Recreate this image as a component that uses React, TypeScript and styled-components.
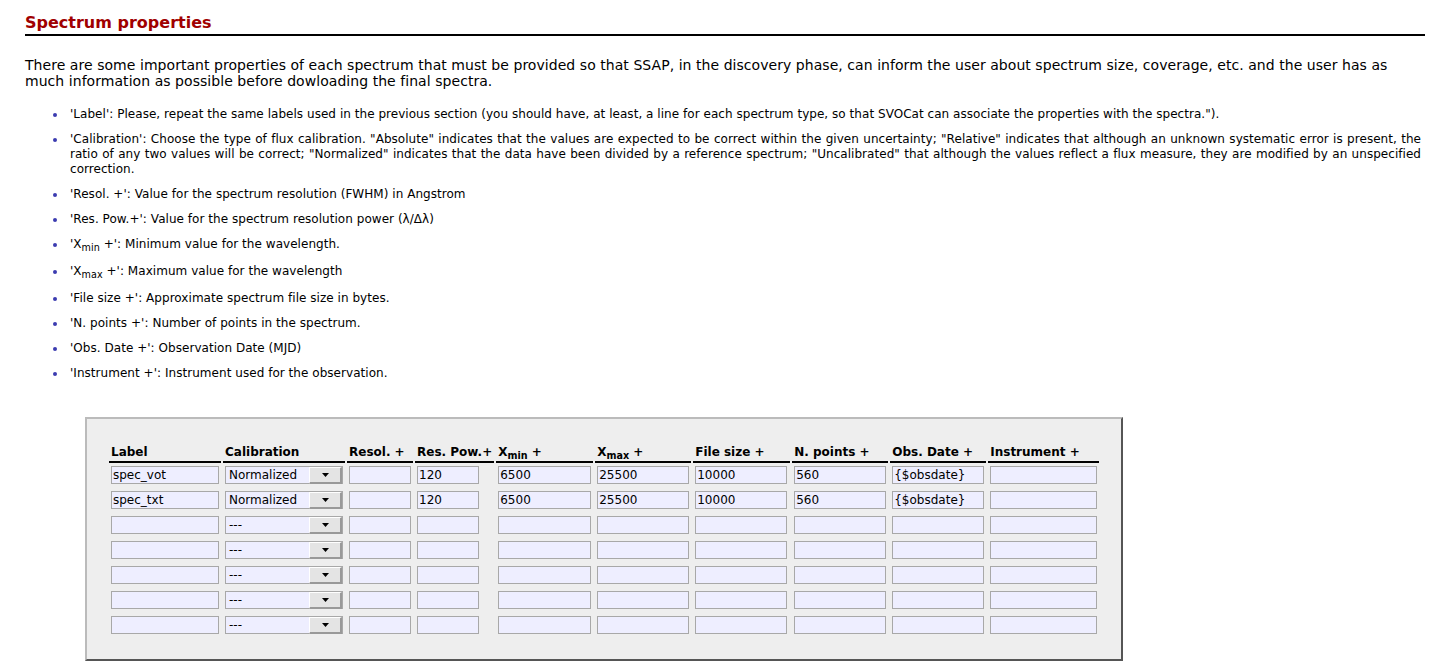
import React from 'react';
import styled, { createGlobalStyle } from 'styled-components';

const GlobalStyle = createGlobalStyle`
  body {
    margin: 0;
    background: #fff;
    color: #000;
    font-family: "DejaVu Sans", Verdana, sans-serif;
  }
`;

const Page = styled.div`
  padding: 13px 30px 0 25px;
`;

const Title = styled.h2`
  margin: 0;
  font-size: 16px;
  line-height: 20px;
  font-weight: bold;
  color: #a00000;
  border-bottom: 2px solid #000;
  padding-bottom: 1px;
`;

const Intro = styled.p`
  margin: 21px 0 18px;
  font-size: 14px;
  line-height: 16px;
  letter-spacing: 0.05px;
`;

const Notes = styled.ul`
  list-style: none;
  margin: 0;
  padding: 0 4px 0 45px;
  font-size: 12px;
  line-height: 15px;
  letter-spacing: 0.04px;
  text-align: justify;
`;

const Note = styled.li<{ $sub?: boolean }>`
  position: relative;
  margin-top: 10px;
  padding-bottom: ${({ $sub }) => ($sub ? '2px' : '0')};

  &::before {
    content: '';
    position: absolute;
    left: -17px;
    top: 6px;
    width: 4px;
    height: 4px;
    border-radius: 50%;
    background: #3b3bb0;
  }
`;

const Box = styled.div`
  box-sizing: border-box;
  margin: 36px 0 0 60px;
  width: 1038px;
  background: #eeeeee;
  border-style: solid;
  border-width: 2px;
  border-color: #bbbbbb #555555 #555555 #bbbbbb;
  padding: 24px 0 21px 20px;
`;

const Grid = styled.table`
  border-collapse: separate;
  border-spacing: 2px 0;
  font-size: 12px;
`;

const Head = styled.th`
  text-align: left;
  font-weight: bold;
  padding: 2px 2px 1px;
  border-bottom: 2px solid #000;
  white-space: nowrap;
  line-height: 15px;
`;

const Cell = styled.td`
  padding: 3px 2px 4px;
  height: 18px;
`;

const Field = styled.input<{ w: number }>`
  box-sizing: border-box;
  display: block;
  width: ${({ w }) => w}px;
  height: 18px;
  margin: 0;
  padding: 0 1px;
  border: 1px solid #a8a8a8;
  background: #eeeeff;
  font-family: "DejaVu Sans", Verdana, sans-serif;
  font-size: 12px;
  color: #000;
  outline: none;
`;

const Select = styled.div`
  box-sizing: border-box;
  display: flex;
  width: 118px;
  height: 18px;
  border: 1px solid #a8a8a8;
  background: #eeeeff;
`;

const SelectText = styled.span`
  flex: 1;
  padding: 0 3px;
  font-size: 12px;
  line-height: 17px;
  white-space: nowrap;
  overflow: hidden;
`;

const SelectButton = styled.span`
  box-sizing: border-box;
  width: 33px;
  height: 17px;
  display: flex;
  align-items: center;
  justify-content: center;
  background: #e4e4e4;
  border-right: 2px solid #999;
  border-bottom: 2px solid #999;
  border-top: 1px solid #fff;
  border-left: 1px solid #fff;
`;

const Sub = styled.sub`
  font-size: 0.8em;
  vertical-align: -3px;
  line-height: 0;
`;

const cols = [
  { key: 'label', head: 'Label', w: 108 },
  { key: 'cal', head: 'Calibration', w: 118 },
  { key: 'resol', head: 'Resol. +', w: 62 },
  { key: 'respow', head: 'Res. Pow.+', w: 62 },
  { key: 'xmin', head: 'min', w: 93 },
  { key: 'xmax', head: 'max', w: 92 },
  { key: 'fsize', head: 'File size +', w: 92 },
  { key: 'npts', head: 'N. points +', w: 92 },
  { key: 'obs', head: 'Obs. Date +', w: 92 },
  { key: 'inst', head: 'Instrument +', w: 107 },
];

const headWidths = [112, 122, 66, 78, 97, 96, 97, 96, 95, 111];

type Row = { label: string; cal: string; resol: string; respow: string; xmin: string; xmax: string; fsize: string; npts: string; obs: string; inst: string };

const filled = (label: string): Row => ({
  label, cal: 'Normalized', resol: '', respow: '120', xmin: '6500', xmax: '25500', fsize: '10000', npts: '560', obs: '{$obsdate}', inst: '',
});
const empty: Row = { label: '', cal: '---', resol: '', respow: '', xmin: '', xmax: '', fsize: '', npts: '', obs: '', inst: '' };

const rows: Row[] = [filled('spec_vot'), filled('spec_txt'), empty, empty, empty, empty, empty];

const Arrow = () => (
  <svg width="7" height="4" viewBox="0 0 7 4">
    <path d="M0 0H7L3.5 4Z" fill="#000" />
  </svg>
);

const headLabel = (c: typeof cols[number]) => {
  if (c.key === 'xmin' || c.key === 'xmax') {
    return <>X<Sub>{c.head}</Sub> +</>;
  }
  return c.head;
};

export default function App() {
  return (
    <>
      <GlobalStyle />
      <Page>
        <Title>Spectrum properties</Title>
        <Intro>
          There are some important properties of each spectrum that must be provided so that SSAP, in the discovery phase, can inform the user about spectrum size, coverage, etc. and the user has as much information as possible before dowloading the final spectra.
        </Intro>
        <Notes>
          <Note>'Label': Please, repeat the same labels used in the previous section (you should have, at least, a line for each spectrum type, so that SVOCat can associate the properties with the spectra.").</Note>
          <Note>'Calibration': Choose the type of flux calibration. "Absolute" indicates that the values are expected to be correct within the given uncertainty; "Relative" indicates that although an unknown systematic error is present, the ratio of any two values will be correct; "Normalized" indicates that the data have been divided by a reference spectrum; "Uncalibrated" that although the values reflect a flux measure, they are modified by an unspecified correction.</Note>
          <Note>'Resol. +': Value for the spectrum resolution (FWHM) in Angstrom</Note>
          <Note>'Res. Pow.+': Value for the spectrum resolution power (λ/Δλ)</Note>
          <Note $sub>'X<Sub>min</Sub> +': Minimum value for the wavelength.</Note>
          <Note $sub>'X<Sub>max</Sub> +': Maximum value for the wavelength</Note>
          <Note>'File size +': Approximate spectrum file size in bytes.</Note>
          <Note>'N. points +': Number of points in the spectrum.</Note>
          <Note>'Obs. Date +': Observation Date (MJD)</Note>
          <Note>'Instrument +': Instrument used for the observation.</Note>
        </Notes>
        <Box>
          <Grid>
            <thead>
              <tr>
                {cols.map((c, i) => (
                  <Head key={c.key} style={{ width: headWidths[i] - 4 }}>{headLabel(c)}</Head>
                ))}
              </tr>
            </thead>
            <tbody>
              {rows.map((r, ri) => (
                <tr key={ri}>
                  {cols.map(c => (
                    <Cell key={c.key}>
                      {c.key === 'cal' ? (
                        <Select>
                          <SelectText>{r.cal}</SelectText>
                          <SelectButton><Arrow /></SelectButton>
                        </Select>
                      ) : (
                        <Field w={c.w} defaultValue={r[c.key as keyof Row]} />
                      )}
                    </Cell>
                  ))}
                </tr>
              ))}
            </tbody>
          </Grid>
        </Box>
      </Page>
    </>
  );
}
